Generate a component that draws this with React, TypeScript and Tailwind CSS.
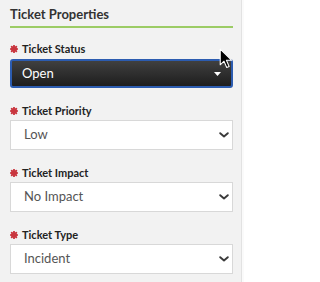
import React from "react"

const font = { fontFamily: "Lato, 'Noto Sans', sans-serif" }

const Asterisk = () => (
  <svg width="8" height="8" viewBox="0 0 14 14" className="shrink-0">
    <g stroke="#c9363f" strokeWidth="3.4" strokeLinecap="round">
      <line x1="7" y1="1.5" x2="7" y2="12.5" />
      <line x1="1.5" y1="7" x2="12.5" y2="7" />
      <line x1="3" y1="3" x2="11" y2="11" />
      <line x1="11" y1="3" x2="3" y2="11" />
    </g>
  </svg>
)

const Chevron = () => (
  <svg width="10" height="6" viewBox="0 0 10 6" className="shrink-0">
    <path d="M1.2 1.2l3.8 3.3 3.8-3.3" fill="none" stroke="#3a3a3a" strokeWidth="1.9" strokeLinecap="round" strokeLinejoin="round" />
  </svg>
)

const Label = ({ text }: { text: string }) => (
  <div className="flex items-center gap-[4px] h-[14px] text-[11px] leading-[14px] font-bold text-[#222]">
    <Asterisk />
    <span>{text}</span>
  </div>
)

const Field = ({ label, value }: { label: string; value: string }) => (
  <div className="mt-[16px]">
    <Label text={label} />
    <div className="mt-[2px] h-[30px] w-[223px] bg-white border border-[#d8d8d8] flex items-center justify-between pl-[13px] pr-[3px]">
      <span className="text-[13px] text-[#555]">{value}</span>
      <Chevron />
    </div>
  </div>
)

const Cursor = () => (
  <svg width="14" height="21" viewBox="0 0 13 20" className="absolute left-[219px] top-[48px]">
    <path d="M1 1v15l3.6-3.4 2.6 6 2.3-1-2.6-5.9H12z" fill="#000" stroke="#fff" strokeWidth="1" strokeLinejoin="round" />
  </svg>
)

export default function App() {
  return (
    <div className="w-[244px] h-[282px] bg-[#fafafa] overflow-hidden" style={font}>
      <div className="relative w-[242px] h-[282px] bg-[#f2f2f2] border-r border-[#e2e2e2] px-[10px] pt-[6px]">
        <h2 className="text-[13px] leading-[16px] font-bold text-[#333]">Ticket Properties</h2>
        <div className="mt-[4px] h-[2px] w-[223px] bg-[#9ccc65]" />

        <div className="mt-[14px]">
          <Label text="Ticket Status" />
          <div className="mt-[3px] h-[29px] w-[223px] rounded-[3px] border-2 border-[#2c5cb0] bg-gradient-to-b from-[#404040] to-[#1e1e1e] flex items-center justify-between pl-[10px] pr-[10px]">
            <span className="text-[13px] text-white">Open</span>
            <svg width="7" height="4" viewBox="0 0 7 4">
              <path d="M0 0h7L3.5 4z" fill="#fff" />
            </svg>
          </div>
        </div>

        <div className="mt-[1px]">
          <Field label="Ticket Priority" value="Low" />
        </div>
        <Field label="Ticket Impact" value="No Impact" />
        <Field label="Ticket Type" value="Incident" />

        <Cursor />
      </div>
    </div>
  )
}
